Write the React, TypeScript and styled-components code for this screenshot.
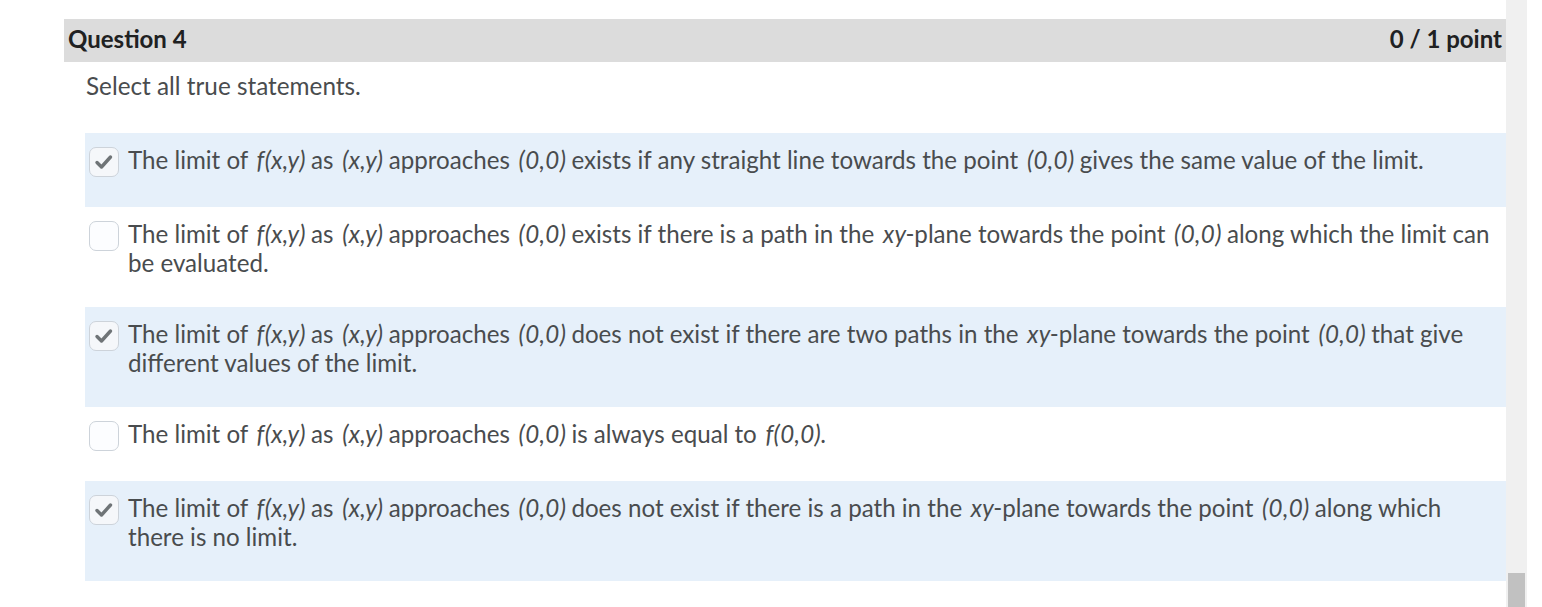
import React from "react";
import styled, { createGlobalStyle } from "styled-components";

type Piece = string | { m: string };

const options: { checked: boolean; parts: Piece[] }[] = [
  {
    checked: true,
    parts: [
      "The limit of ",
      { m: "f(x,y)" },
      " as ",
      { m: "(x,y)" },
      " approaches ",
      { m: "(0,0)" },
      " exists if any straight line towards the point ",
      { m: "(0,0)" },
      " gives the same value of the limit.",
    ],
  },
  {
    checked: false,
    parts: [
      "The limit of ",
      { m: "f(x,y)" },
      " as ",
      { m: "(x,y)" },
      " approaches ",
      { m: "(0,0)" },
      " exists if there is a path in the ",
      { m: "xy" },
      "-plane towards the point ",
      { m: "(0,0)" },
      " along which the limit can be evaluated.",
    ],
  },
  {
    checked: true,
    parts: [
      "The limit of ",
      { m: "f(x,y)" },
      " as ",
      { m: "(x,y)" },
      " approaches ",
      { m: "(0,0)" },
      " does not exist if there are two paths in the ",
      { m: "xy" },
      "-plane towards the point ",
      { m: "(0,0)" },
      " that give different values of the limit.",
    ],
  },
  {
    checked: false,
    parts: [
      "The limit of ",
      { m: "f(x,y)" },
      " as ",
      { m: "(x,y)" },
      " approaches ",
      { m: "(0,0)" },
      " is always equal to ",
      { m: "f(0,0)" },
      ".",
    ],
  },
  {
    checked: true,
    parts: [
      "The limit of ",
      { m: "f(x,y)" },
      " as ",
      { m: "(x,y)" },
      " approaches ",
      { m: "(0,0)" },
      " does not exist if there is a path in the ",
      { m: "xy" },
      "-plane towards the point ",
      { m: "(0,0)" },
      " along which there is no limit.",
    ],
  },
];

export default function App() {
  return (
    <>
      <GlobalStyle />
      <Page>
        <Content>
          <Header>
            <span>Question 4</span>
            <span>0 / 1 point</span>
          </Header>
          <Prompt>Select all true statements.</Prompt>
          <OptionList>
            {options.map((opt, i) => (
              <Option key={i} shaded={opt.checked}>
                <Box checked={opt.checked}>
                  {opt.checked && (
                    <svg width="30" height="30" viewBox="0 0 30 30">
                      <path
                        d="M8 15.5 L12.5 20 L21.5 10"
                        fill="none"
                        stroke="#6f7477"
                        strokeWidth="3.4"
                        strokeLinecap="round"
                        strokeLinejoin="round"
                      />
                    </svg>
                  )}
                </Box>
                <Label>
                  {opt.parts.map((p, j) =>
                    typeof p === "string" ? p : <Math key={j}>{p.m}</Math>
                  )}
                </Label>
              </Option>
            ))}
          </OptionList>
        </Content>
        <Track>
          <Thumb />
        </Track>
      </Page>
    </>
  );
}

const GlobalStyle = createGlobalStyle`
  body {
    margin: 0;
    background: #fff;
    font-family: Lato, "Liberation Sans", sans-serif;
  }
`;

const Page = styled.div`
  display: flex;
  height: 607px;
  overflow: hidden;
`;

const Content = styled.div`
  width: 1442px;
  margin-left: 64px;
  padding-top: 19px;
`;

const Header = styled.div`
  display: flex;
  justify-content: space-between;
  align-items: center;
  box-sizing: border-box;
  height: 43px;
  padding: 0 4px 4px 4px;
  background: #dcdcdc;
  color: #202122;
  font-size: 24px;
  font-weight: 700;
`;

const Prompt = styled.div`
  padding: 9px 0 0 22px;
  margin-bottom: 33px;
  color: #494c4e;
  font-size: 24.3px;
  line-height: 29px;
`;

const OptionList = styled.div`
  margin-left: 21px;
`;

const Option = styled.div<{ shaded: boolean }>`
  display: flex;
  align-items: flex-start;
  gap: 9px;
  padding: 12px 11px 30px 4px;
  background: ${(p) => (p.shaded ? "#e6f0fa" : "#fff")};
`;

const Box = styled.div<{ checked: boolean }>`
  flex: none;
  width: 28px;
  height: 28px;
  margin-top: 2px;
  border: 1px solid #cdd3da;
  border-radius: 7px;
  background: ${(p) => (p.checked ? "#f5f7fa" : "#fcfdff")};
  display: flex;
  align-items: center;
  justify-content: center;
  svg {
    display: block;
    margin: -1px;
  }
`;

const Label = styled.div`
  color: #494c4e;
  font-size: 24.15px;
  line-height: 29px;
`;

const Math = styled.i`
  margin: 0 -1px 0 2.5px;
  letter-spacing: 0.35px;
`;

const Track = styled.div`
  width: 21px;
  height: 607px;
  background: #f0f0f0;
  display: flex;
  flex-direction: column;
  justify-content: flex-end;
  align-items: center;
`;

const Thumb = styled.div`
  width: 17px;
  height: 34px;
  background: #c1c1c1;
`;
